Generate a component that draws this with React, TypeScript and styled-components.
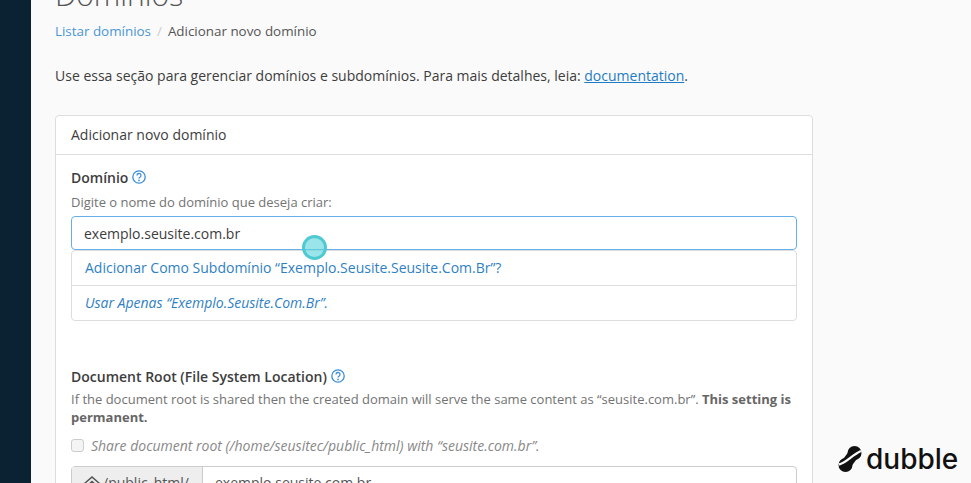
import { createGlobalStyle } from 'styled-components';
import styled from 'styled-components';

const GlobalStyle = createGlobalStyle`
  html, body {
    margin: 0;
    height: 483px;
    overflow: hidden;
    background: #fafafa;
    font-family: 'Open Sans', sans-serif;
    color: #333;
  }
  * { box-sizing: border-box; }
`;

const Page = styled.div`
  display: flex;
  height: 483px;
  overflow: hidden;
  position: relative;
`;

const Sidebar = styled.aside`
  width: 31px;
  flex: none;
  background: #0b2233;
`;

const Main = styled.main`
  width: 782px;
  padding-left: 24px;
`;

const Title = styled.h1`
  margin: -23px 0 0;
  font-size: 30px;
  line-height: 36px;
  font-weight: 300;
  color: #555;
`;

const Breadcrumb = styled.nav`
  display: flex;
  margin-top: 8px;
  height: 20px;
  font-size: 13.4px;
  line-height: 20px;
  color: #555;
`;

const Link = styled.a`
  color: #4a96d6;
`;

const Sep = styled.span`
  color: #ccc;
  padding: 0 6px;
`;

const Intro = styled.p`
  margin: 25px 0 0;
  font-size: 14px;
  line-height: 20px;
  color: #3d3d3d;

  a {
    color: #1f7cc4;
    text-decoration: underline;
  }
`;

const Card = styled.section`
  margin-top: 29px;
  background: #fff;
  border: 1px solid #ddd;
  border-radius: 4px;
`;

const CardHead = styled.header`
  height: 39px;
  padding: 0 15px;
  border-bottom: 1px solid #ddd;
  font-size: 14px;
  line-height: 38px;
  color: #3d3d3d;
`;

const CardBody = styled.div`
  padding: 12px 15px 0;
`;

const Label = styled.label`
  display: flex;
  align-items: center;
  gap: 4px;
  height: 20px;
  font-size: 14px;
  font-weight: 600;
  color: #3d3d3d;
`;

const Help = styled.p<{ $top?: number }>`
  margin: ${(p) => p.$top ?? 4}px 0 0;
  font-size: 13px;
  line-height: 18px;
  color: #737373;

  strong {
    color: #666;
  }
`;

const DomainInput = styled.div`
  margin-top: 5px;
  height: 34px;
  padding: 0 12px;
  border: 1px solid #66afe9;
  border-radius: 4px;
  font-size: 14px;
  line-height: 33px;
  color: #3d3d3d;
`;

const Suggestions = styled.ul`
  margin: 0;
  padding: 0;
  list-style: none;
  border: 1px solid #ddd;
  border-radius: 4px;
`;

const Suggestion = styled.li<{ $italic?: boolean }>`
  height: 34px;
  padding: 0 13px;
  font-size: 14px;
  line-height: 34px;
  color: #2f7fc5;
  font-style: ${(p) => (p.$italic ? 'italic' : 'normal')};

  &:not(:last-child) {
    height: 35px;
    border-bottom: 1px solid #ddd;
  }
`;

const Section = styled.div`
  margin-top: 45px;
`;

const CheckRow = styled.div`
  display: flex;
  align-items: center;
  gap: 7px;
  margin-top: 9px;
  height: 20px;
  font-size: 14px;
  font-style: italic;
  color: #888;
`;

const Checkbox = styled.span`
  width: 13px;
  height: 13px;
  border: 1px solid #ccc;
  border-radius: 3px;
  background: #f4f4f4;
`;

const InputGroup = styled.div`
  display: flex;
  margin-top: 11px;
  height: 34px;
  border: 1px solid #ccc;
  border-radius: 4px;
  font-size: 14px;
  line-height: 32px;
`;

const Addon = styled.div`
  display: flex;
  align-items: center;
  gap: 3px;
  width: 131px;
  padding: 0 12px;
  height: 32px;
  background: #eee;
  border-right: 1px solid #ccc;
  color: #555;
`;

const GroupValue = styled.div`
  padding: 0 12px;
  color: #555;
`;

const Cursor = styled.div`
  position: absolute;
  left: 302px;
  top: 235px;
  width: 25px;
  height: 25px;
  border-radius: 50%;
  border: 3px solid #4fc9d2;
  background: rgba(100, 215, 222, 0.65);
`;

const Brand = styled.div`
  position: absolute;
  left: 838px;
  top: 445px;
  display: flex;
  align-items: center;
  gap: 4px;
  font-family: 'Inter', sans-serif;
  font-size: 28px;
  line-height: 28px;
  font-weight: 500;
  color: #111;
`;

function HelpIcon() {
  return (
    <svg width='14' height='14' viewBox='0 0 14 14' fill='none' stroke='#3a8ed6'>
      <circle cx='7' cy='7' r='6.2' strokeWidth='1.3' />
      <path d='M5 5.500a2 2 0 1 1 3 1.700c-.7.400-1 .800-1 1.400' strokeWidth='1.3' />
      <circle cx='7' cy='10.400' r='.85' fill='#3a8ed6' stroke='none' />
    </svg>
  );
}

function HomeIcon() {
  return (
    <svg width='16' height='14' viewBox='0 0 16 14' fill='#555'>
      <path d='M8 0 0 7l1 1 7-6 7 6 1-1zM3 9 8 4.500 13 9v5H3z' />
    </svg>
  );
}

function DubbleLogo() {
  return (
    <svg width='24' height='26' viewBox='0 0 24 26'>
      <circle cx='16.500' cy='7' r='7' fill='#111' />
      <circle cx='7.500' cy='19' r='7' fill='#111' />
      <path d='M16.500 7 7.500 19' stroke='#111' strokeWidth='11' />
      <path d='M1 18.500C8 17 14 9 23 5' stroke='#fafafa' strokeWidth='2.400' fill='none' />
    </svg>
  );
}

export default function App() {
  return (
    <>
      <GlobalStyle />
      <Page>
        <Sidebar />
        <Main>
          <Title>Domínios</Title>
          <Breadcrumb>
            <Link>Listar domínios</Link>
            <Sep>/</Sep>
            <span>Adicionar novo domínio</span>
          </Breadcrumb>
          <Intro>
            Use essa seção para gerenciar domínios e subdomínios. Para mais detalhes, leia:{' '}
            <a>documentation</a>.
          </Intro>
          <Card>
            <CardHead>Adicionar novo domínio</CardHead>
            <CardBody>
              <Label>
                Domínio <HelpIcon />
              </Label>
              <Help $top={6}>Digite o nome do domínio que deseja criar:</Help>
              <DomainInput>exemplo.seusite.com.br</DomainInput>
              <Suggestions>
                <Suggestion>Adicionar Como Subdomínio “Exemplo.Seusite.Seusite.Com.Br”?</Suggestion>
                <Suggestion $italic>Usar Apenas “Exemplo.Seusite.Com.Br”.</Suggestion>
              </Suggestions>
              <Section>
                <Label>
                  Document Root (File System Location) <HelpIcon />
                </Label>
                <Help>
                  If the document root is shared then the created domain will serve the same content
                  as “seusite.com.br”. <strong>This setting is permanent.</strong>
                </Help>
                <CheckRow>
                  <Checkbox />
                  Share document root (/home/seusitec/public_html) with “seusite.com.br”.
                </CheckRow>
                <InputGroup>
                  <Addon>
                    <HomeIcon />
                    /public_html/
                  </Addon>
                  <GroupValue>exemplo.seusite.com.br</GroupValue>
                </InputGroup>
              </Section>
            </CardBody>
          </Card>
        </Main>
        <Cursor />
        <Brand>
          <DubbleLogo />
          dubble
        </Brand>
      </Page>
    </>
  );
}
